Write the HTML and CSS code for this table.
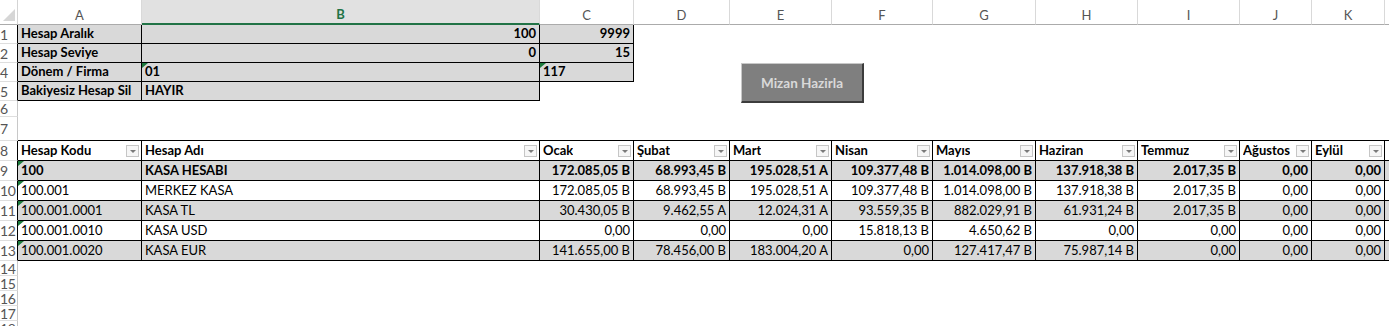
FILE: index.html
```html
<!DOCTYPE html>
<html lang="tr">
<head>
<meta charset="utf-8">
<title>Mizan</title>
<link rel="stylesheet" href="styles.css">
</head>
<body>
<div class="wrap">
  <div class="sheet">
    <!-- column headers -->
    <div class="corner"><svg width="17" height="24" viewBox="0 0 17 24"><polygon points="15,9 15,21 3,21" fill="#d6d6d6"/></svg></div>
    <div class="ch">A</div>
    <div class="ch sel">B</div>
    <div class="ch">C</div>
    <div class="ch">D</div>
    <div class="ch">E</div>
    <div class="ch">F</div>
    <div class="ch">G</div>
    <div class="ch">H</div>
    <div class="ch">I</div>
    <div class="ch">J</div>
    <div class="ch">K</div>
    <div class="ch last"></div>

    <!-- row 1 -->
    <div class="rh rk">1</div>
    <div class="c g b bo">Hesap Aralık</div>
    <div class="c g b bo n">100</div>
    <div class="c g b bo n">9999</div>
    <div class="c sp9"></div>

    <!-- row 2 -->
    <div class="rh rk">2</div>
    <div class="c g b bo">Hesap Seviye</div>
    <div class="c g b bo n">0</div>
    <div class="c g b bo n">15</div>
    <div class="c sp9"></div>

    <!-- row 4 -->
    <div class="rh rk">4</div>
    <div class="c g b bo">Dönem / Firma</div>
    <div class="c g b bo tri">01</div>
    <div class="c g b bo tri">117</div>
    <div class="c sp9"></div>

    <!-- row 5 -->
    <div class="rh rk">5</div>
    <div class="c g b bo">Bakiyesiz Hesap Sil</div>
    <div class="c g b bo">HAYIR</div>
    <div class="c sp10"></div>

    <!-- row 6 -->
    <div class="rh">6</div>
    <div class="c sp12"></div>

    <!-- row 7 -->
    <div class="rh">7</div>
    <div class="c sp12 tb"></div>

    <!-- row 8 : table header -->
    <div class="rh rk">8</div>
    <div class="c b hd"><span>Hesap Kodu</span><i class="fb"></i></div>
    <div class="c b hd"><span>Hesap Adı</span><i class="fb"></i></div>
    <div class="c b hd"><span>Ocak</span><i class="fb"></i></div>
    <div class="c b hd"><span>Şubat</span><i class="fb"></i></div>
    <div class="c b hd"><span>Mart</span><i class="fb"></i></div>
    <div class="c b hd"><span>Nisan</span><i class="fb"></i></div>
    <div class="c b hd"><span>Mayıs</span><i class="fb"></i></div>
    <div class="c b hd"><span>Haziran</span><i class="fb"></i></div>
    <div class="c b hd"><span>Temmuz</span><i class="fb"></i></div>
    <div class="c b hd"><span>Ağustos</span><i class="fb"></i></div>
    <div class="c b hd"><span>Eylül</span><i class="fb"></i></div>
    <div class="c b hd"><span>E</span></div>

    <!-- row 9 -->
    <div class="rh rk">9</div>
    <div class="c g b bo tri">100</div>
    <div class="c g b bo">KASA HESABI</div>
    <div class="c g b bo n">172.085,05 B</div>
    <div class="c g b bo n">68.993,45 B</div>
    <div class="c g b bo n">195.028,51 A</div>
    <div class="c g b bo n">109.377,48 B</div>
    <div class="c g b bo n">1.014.098,00 B</div>
    <div class="c g b bo n">137.918,38 B</div>
    <div class="c g b bo n">2.017,35 B</div>
    <div class="c g b bo n">0,00</div>
    <div class="c g b bo n">0,00</div>
    <div class="c g b"></div>

    <!-- row 10 -->
    <div class="rh rk">10</div>
    <div class="c b tri">100.001</div>
    <div class="c b">MERKEZ KASA</div>
    <div class="c b n">172.085,05 B</div>
    <div class="c b n">68.993,45 B</div>
    <div class="c b n">195.028,51 A</div>
    <div class="c b n">109.377,48 B</div>
    <div class="c b n">1.014.098,00 B</div>
    <div class="c b n">137.918,38 B</div>
    <div class="c b n">2.017,35 B</div>
    <div class="c b n">0,00</div>
    <div class="c b n">0,00</div>
    <div class="c b"></div>

    <!-- row 11 -->
    <div class="rh rk">11</div>
    <div class="c g b tri">100.001.0001</div>
    <div class="c g b">KASA TL</div>
    <div class="c g b n">30.430,05 B</div>
    <div class="c g b n">9.462,55 A</div>
    <div class="c g b n">12.024,31 A</div>
    <div class="c g b n">93.559,35 B</div>
    <div class="c g b n">882.029,91 B</div>
    <div class="c g b n">61.931,24 B</div>
    <div class="c g b n">2.017,35 B</div>
    <div class="c g b n">0,00</div>
    <div class="c g b n">0,00</div>
    <div class="c g b"></div>

    <!-- row 12 -->
    <div class="rh rk">12</div>
    <div class="c b tri">100.001.0010</div>
    <div class="c b">KASA USD</div>
    <div class="c b n">0,00</div>
    <div class="c b n">0,00</div>
    <div class="c b n">0,00</div>
    <div class="c b n">15.818,13 B</div>
    <div class="c b n">4.650,62 B</div>
    <div class="c b n">0,00</div>
    <div class="c b n">0,00</div>
    <div class="c b n">0,00</div>
    <div class="c b n">0,00</div>
    <div class="c b"></div>

    <!-- row 13 -->
    <div class="rh rk">13</div>
    <div class="c g b tri">100.001.0020</div>
    <div class="c g b">KASA EUR</div>
    <div class="c g b n">141.655,00 B</div>
    <div class="c g b n">78.456,00 B</div>
    <div class="c g b n">183.004,20 A</div>
    <div class="c g b n">0,00</div>
    <div class="c g b n">127.417,47 B</div>
    <div class="c g b n">75.987,14 B</div>
    <div class="c g b n">0,00</div>
    <div class="c g b n">0,00</div>
    <div class="c g b n">0,00</div>
    <div class="c g b"></div>

    <!-- rows 14-18 -->
    <div class="rh">14</div>
    <div class="c sp12"></div>
    <div class="rh">15</div>
    <div class="c sp12"></div>
    <div class="rh">16</div>
    <div class="c sp12"></div>
    <div class="rh">17</div>
    <div class="c sp12"></div>
    <div class="rh">18</div>
    <div class="c sp12"></div>
  </div>

  <button class="btn" type="button">Mizan Hazirla</button>
</div>
</body>
</html>
```

FILE: styles.css
```css
html, body {
  margin: 0;
  padding: 0;
  background: #ffffff;
  overflow: hidden;
}

.wrap {
  position: relative;
  width: 1389px;
  height: 326px;
  overflow: hidden;
  font-family: Lato, "Liberation Sans", sans-serif;
  font-size: 13px;
  color: #000;
}

.sheet {
  display: grid;
  width: 1389px;
  grid-template-columns: 18px 124px 398px 94px 96px 102px 101px 103px 102px 102px 72px 73px 4px;
  grid-template-rows: 25px 19px 19px 19px 19px 16px 24px repeat(6, 20px) repeat(5, 15px);
}

.sheet > div {
  box-sizing: border-box;
  min-width: 0;
}

/* column headers */
.corner {
  border-right: 1px solid #d4d4d4;
  border-bottom: 1px solid #ababab;
  display: flex;
}

.ch {
  display: flex;
  align-items: flex-end;
  justify-content: center;
  padding-bottom: 2px;
  font-size: 13px;
  line-height: 14px;
  color: #555;
  border-right: 1px solid #d9d9d9;
  border-bottom: 1px solid #ababab;
}

.ch.last {
  border-right: 0;
}

.ch.sel {
  background: #e1e1e1;
  color: #217346;
  font-weight: bold;
  border-bottom: 2px solid #217346;
}

/* row headers */
.rh {
  display: flex;
  align-items: center;
  font-size: 14px;
  line-height: 13px;
  letter-spacing: -0.3px;
  color: #555;
  border-right: 1px solid #c8c8c8;
  border-bottom: 1px solid #dedede;
  white-space: nowrap;
  overflow: visible;
}

.rh.rk {
  border-right-color: #000;
}

/* cells */
.c {
  display: flex;
  align-items: flex-end;
  padding: 0 3px 2px 3px;
  line-height: 15px;
  white-space: nowrap;
  overflow: hidden;
}

.g { background: #d9d9d9; }

.b {
  border-right: 1px solid #000;
  border-bottom: 1px solid #000;
}

.bo { font-weight: bold; }

.n { justify-content: flex-end; }

.sp9 { grid-column: span 9; }
.sp10 { grid-column: span 10; }
.sp12 { grid-column: span 12; }

.tb { border-bottom: 1px solid #000; }

.tri { position: relative; }
.tri::before {
  content: "";
  position: absolute;
  left: 0;
  top: 0;
  border-top: 5px solid #1d7a3c;
  border-right: 6px solid transparent;
}

/* table header with filter buttons */
.hd {
  justify-content: space-between;
  font-weight: bold;
}

.hd span {
  overflow: hidden;
}

.fb {
  flex: none;
  box-sizing: border-box;
  width: 13px;
  height: 12px;
  margin: 0 -1px 1px 2px;
  border: 1px solid #c6c6c6;
  background: #f6f6f6;
  display: flex;
  align-items: center;
  justify-content: center;
}

.fb::after {
  content: "";
  border-left: 3px solid transparent;
  border-right: 3px solid transparent;
  border-top: 3px solid #7a7a7a;
}

/* floating macro button */
.btn {
  position: absolute;
  left: 741px;
  top: 63px;
  width: 123px;
  height: 40px;
  box-sizing: border-box;
  margin: 0;
  padding: 0;
  background: #7f7f7f;
  color: #d9d9d9;
  font-family: Lato, "Liberation Sans", sans-serif;
  font-weight: bold;
  font-size: 13.5px;
  border-style: solid;
  border-width: 1px 2px 2px 1px;
  border-color: #c8c8c8 #3c3c3c #3c3c3c #c8c8c8;
  cursor: default;
}
```
